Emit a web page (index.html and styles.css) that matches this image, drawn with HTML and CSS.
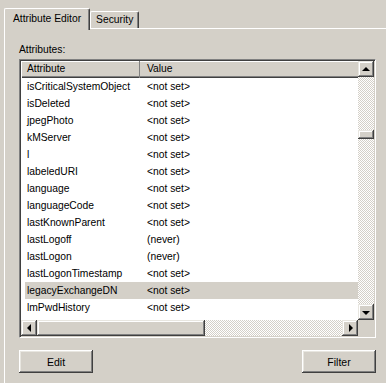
FILE: index.html
```html
<!doctype html>
<html lang="en">
<head>
    <meta charset="UTF-8" />
    <title>Attribute Editor</title>
    <link rel="stylesheet" href="styles.css">
</head>
<body>
    <div class="tabs">
        <div class="tab active">Attribute Editor</div>
        <div class="tab">Security</div>
    </div>
    <div class="panel">
        <div class="label">Attributes:</div>
        <div class="listbox">
            <div class="list">
                <div class="header">
                    <div class="hcell col-attr">Attribute</div>
                    <div class="hcell col-val">Value</div>
                </div>
                <div class="row"><span class="col-attr">isCriticalSystemObject</span><span class="col-val">&lt;not set&gt;</span></div>
                <div class="row"><span class="col-attr">isDeleted</span><span class="col-val">&lt;not set&gt;</span></div>
                <div class="row"><span class="col-attr">jpegPhoto</span><span class="col-val">&lt;not set&gt;</span></div>
                <div class="row"><span class="col-attr">kMServer</span><span class="col-val">&lt;not set&gt;</span></div>
                <div class="row"><span class="col-attr">l</span><span class="col-val">&lt;not set&gt;</span></div>
                <div class="row"><span class="col-attr">labeledURI</span><span class="col-val">&lt;not set&gt;</span></div>
                <div class="row"><span class="col-attr">language</span><span class="col-val">&lt;not set&gt;</span></div>
                <div class="row"><span class="col-attr">languageCode</span><span class="col-val">&lt;not set&gt;</span></div>
                <div class="row"><span class="col-attr">lastKnownParent</span><span class="col-val">&lt;not set&gt;</span></div>
                <div class="row"><span class="col-attr">lastLogoff</span><span class="col-val">(never)</span></div>
                <div class="row"><span class="col-attr">lastLogon</span><span class="col-val">(never)</span></div>
                <div class="row"><span class="col-attr">lastLogonTimestamp</span><span class="col-val">&lt;not set&gt;</span></div>
                <div class="row selected"><span class="col-attr">legacyExchangeDN</span><span class="col-val">&lt;not set&gt;</span></div>
                <div class="row"><span class="col-attr">lmPwdHistory</span><span class="col-val">&lt;not set&gt;</span></div>
                <div class="row"><span class="col-attr">localeID</span><span class="col-val">&lt;not set&gt;</span></div>
            </div>
            <div class="vscroll">
                <div class="sbtn"><span class="arrow up"></span></div>
                <div class="vtrack"><div class="vthumb"></div></div>
                <div class="sbtn"><span class="arrow down"></span></div>
            </div>
            <div class="hscroll">
                <div class="sbtn"><span class="arrow left"></span></div>
                <div class="hthumb"></div>
                <div class="htrack"></div>
                <div class="sbtn"><span class="arrow right"></span></div>
            </div>
            <div class="corner"></div>
        </div>
        <div class="actions">
            <button class="btn">Edit</button>
            <button class="btn">Filter</button>
        </div>
    </div>
</body>
</html>
```

FILE: styles.css
```css
body {
    margin: 0;
    background-color: #d4d0c8;
    font-family: 'Liberation Sans', Arial, sans-serif;
    font-size: 10.3px;
    color: #000;
    overflow: hidden;
}

/* Tabs */
.tabs {
    display: flex;
    align-items: flex-end;
    height: 28px;
    padding: 8px 0 0 4px;
    box-sizing: border-box;
}

.tab {
    height: 17px;
    line-height: 16px;
    padding: 0 5px;
    box-sizing: border-box;
    white-space: nowrap;
    border-top: 1px solid #fff;
    border-left: 1px solid #fff;
    border-right: 1px solid #404040;
    box-shadow: inset -1px 0 #808080;
    border-radius: 2px 2px 0 0;
}

.tab.active {
    position: relative;
    z-index: 1;
    height: 22px;
    line-height: 19px;
    padding: 0 8px;
    margin-bottom: -2px;
    background-color: #d4d0c8;
}

/* Panel */
.panel {
    margin-left: 4px;
    height: 355px;
    box-sizing: border-box;
    padding: 14px 0 0 14px;
    border-top: 1px solid #fff;
    border-left: 1px solid #fff;
}

.label {
    line-height: 13px;
    margin-bottom: 3px;
}

/* List box */
.listbox {
    width: 357px;
    height: 279px;
    box-sizing: border-box;
    border: 1px solid;
    border-color: #808080 #fff #fff #808080;
    box-shadow: inset 1px 1px #404040, inset -1px -1px #d4d0c8;
    padding: 1px;
    display: grid;
    grid-template-columns: 1fr 16px;
    grid-template-rows: 1fr 16px;
    background-color: #fff;
}

.list {
    overflow: hidden;
    background-color: #fff;
}

.header {
    display: flex;
    height: 17px;
    line-height: 16px;
    background-color: #d4d0c8;
    box-shadow: inset 0 1px #fff, inset 0 -1px #404040, inset 0 -2px #808080;
}

.hcell {
    box-sizing: border-box;
}

.header .col-attr {
    width: 119px;
    padding-left: 6px;
    box-shadow: inset -1px 0 #808080, inset 1px 0 #fff;
}

.header .col-val {
    padding-left: 7px;
    flex: 1;
}

.row {
    display: flex;
    height: 17px;
    line-height: 17px;
    margin-left: 4px;
    white-space: nowrap;
}

.row .col-attr {
    width: 115px;
    padding-left: 2px;
    box-sizing: border-box;
}

.row .col-val {
    padding-left: 7px;
}

.row.selected {
    background-color: #d4d0c8;
}

/* Scrollbars */
.vscroll,
.hscroll {
    display: flex;
    background: repeating-conic-gradient(#d4d0c8 0 25%, #fff 0 50%) 0 0 / 2px 2px;
}

.vscroll {
    flex-direction: column;
}

.vtrack {
    flex: 1;
}

.htrack {
    flex: 1;
}

.sbtn,
.vthumb,
.hthumb {
    width: 16px;
    height: 16px;
    display: flex;
    align-items: center;
    justify-content: center;
    background-color: #d4d0c8;
    box-shadow: inset -1px -1px #404040, inset 1px 1px #e8e6e0, inset -2px -2px #808080, inset 2px 2px #fff;
    flex-shrink: 0;
}

.vthumb {
    height: 9px;
    margin-top: 53px;
}

.hthumb {
    width: 168px;
}

.corner {
    background-color: #d4d0c8;
}

.arrow {
    width: 0;
    height: 0;
    border: 4px solid transparent;
}

.arrow.up {
    border-top: none;
    border-bottom-color: #000;
    margin-top: -1px;
}

.arrow.down {
    border-bottom: none;
    border-top-color: #000;
    margin-top: 1px;
}

.arrow.left {
    border-left: none;
    border-right-color: #000;
}

.arrow.right {
    border-right: none;
    border-left-color: #000;
    margin-left: 1px;
}

/* Buttons */
.actions {
    display: flex;
    justify-content: space-between;
    width: 357px;
    margin-top: 12px;
}

.btn {
    width: 74px;
    height: 23px;
    font-family: inherit;
    font-size: 10.5px;
    color: #000;
    background-color: #d4d0c8;
    border: none;
    padding: 0;
    box-shadow: inset -1px -1px #404040, inset 1px 1px #fff, inset -2px -2px #808080, inset 2px 2px #e8e6e0;
}
```
